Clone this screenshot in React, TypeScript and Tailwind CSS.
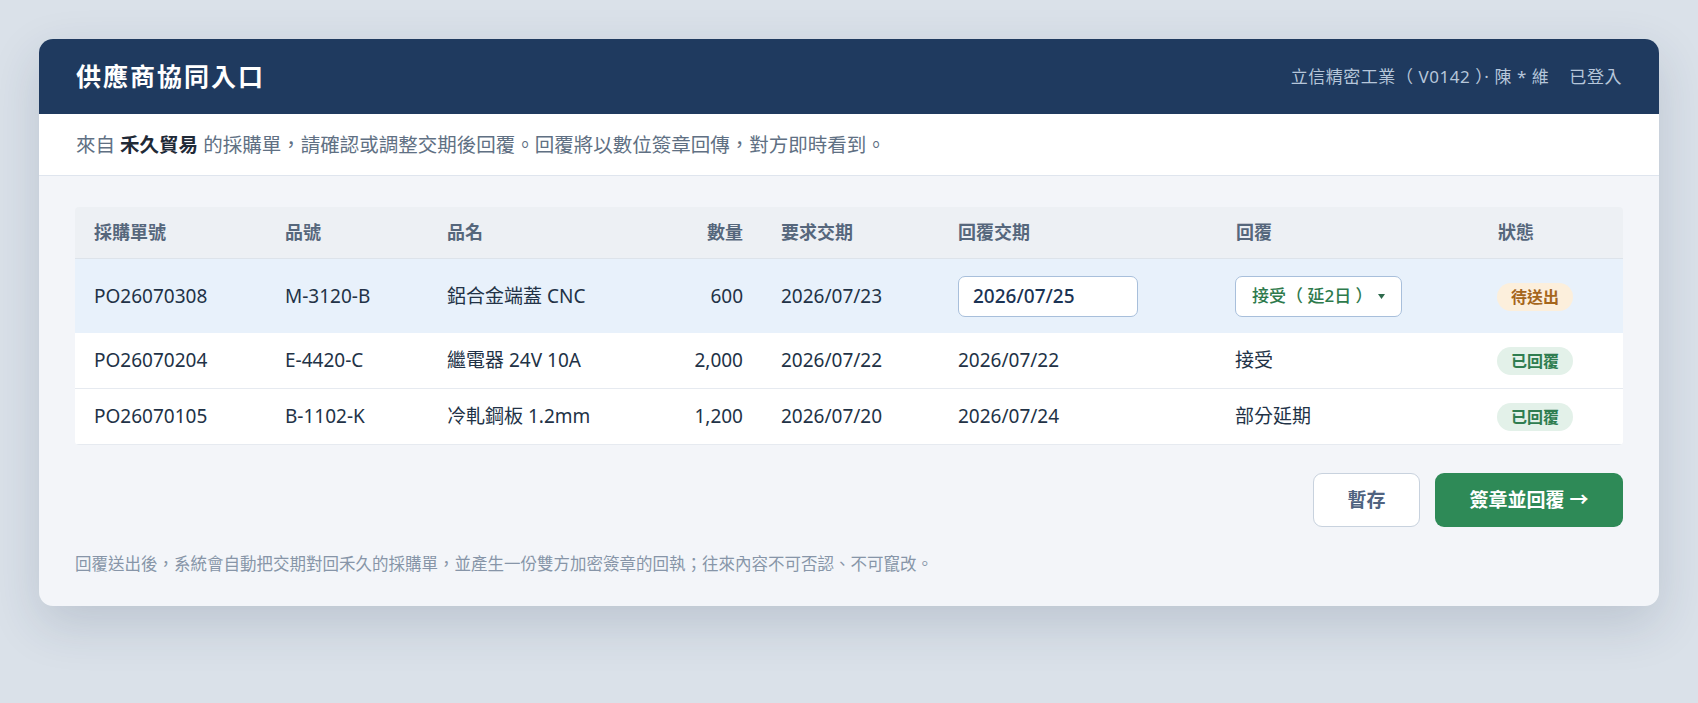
import React from "react";

type Row = {
  po: string;
  part: string;
  name: string;
  qty: string;
  required: string;
  reply: string;
  answer: string;
  status: "pending" | "replied";
  editing?: boolean;
};

const rows: Row[] = [
  {
    po: "PO26070308",
    part: "M-3120-B",
    name: "鋁合金端蓋 CNC",
    qty: "600",
    required: "2026/07/23",
    reply: "2026/07/25",
    answer: "接受（ 延2日 ）",
    status: "pending",
    editing: true,
  },
  {
    po: "PO26070204",
    part: "E-4420-C",
    name: "繼電器 24V 10A",
    qty: "2,000",
    required: "2026/07/22",
    reply: "2026/07/22",
    answer: "接受",
    status: "replied",
  },
  {
    po: "PO26070105",
    part: "B-1102-K",
    name: "冷軋鋼板 1.2mm",
    qty: "1,200",
    required: "2026/07/20",
    reply: "2026/07/24",
    answer: "部分延期",
    status: "replied",
  },
];

const cols = "grid grid-cols-[191px_162px_192px_142px_177px_278px_262px_1fr]";

function StatusBadge({ status }: { status: Row["status"] }) {
  if (status === "pending") {
    return (
      <span className="inline-flex h-[28px] items-center rounded-full bg-[#fcefdc] px-[14px] text-[16px] font-semibold text-[#a5661c]">
        待送出
      </span>
    );
  }
  return (
    <span className="inline-flex h-[28px] items-center rounded-full bg-[#e3f1e9] px-[14px] text-[16px] font-semibold text-[#2f7d50]">
      已回覆
    </span>
  );
}

export default function App() {
  return (
    <div className="min-h-screen bg-[#dae1e9] p-[39px] font-['Noto_Sans','Noto_Sans_CJK_TC',sans-serif]">
      <div className="overflow-hidden rounded-[14px] bg-[#f3f5f9] shadow-[0_18px_50px_rgba(30,50,80,0.16)]">
        {/* Title bar */}
        <div className="flex h-[75px] items-center justify-between bg-[#1f3a5f] px-[37px]">
          <h1 className="text-[25px] font-bold tracking-[2px] text-white">供應商協同入口</h1>
          <div className="flex items-center text-[17px] tracking-[0.55px] text-[#b6c6da]">
            <span>立信精密工業（ V0142 ）· 陳 * 維</span>
            <span className="ml-[20px]">已登入</span>
          </div>
        </div>

        {/* Notice */}
        <div className="flex h-[62px] items-center border-b border-[#dfe5ee] bg-white px-[37px] text-[19.5px] text-[#607083]">
          <span>
            來自 <b className="font-bold text-[#1f2a37]">禾久貿易</b> 的採購單，請確認或調整交期後回覆。回覆將以數位簽章回傳，對方即時看到。
          </span>
        </div>

        {/* Body */}
        <div className="px-[36px] pt-[31px] pb-[30px]">
          <div className="overflow-hidden rounded-[4px]">
            <div className={`${cols} h-[52px] items-center border-b border-[#dde3ea] bg-[#edf0f4] text-[18px] font-semibold text-[#56677c]`}>
              <div className="px-[19px]">採購單號</div>
              <div className="px-[19px]">品號</div>
              <div className="px-[19px]">品名</div>
              <div className="px-[19px] text-right">數量</div>
              <div className="px-[19px]">要求交期</div>
              <div className="px-[19px]">回覆交期</div>
              <div className="px-[19px]">回覆</div>
              <div className="px-[19px]">狀態</div>
            </div>

            {rows.map((r) => (
              <div
                key={r.po}
                className={
                  r.editing
                    ? `${cols} h-[74px] items-center bg-[#e8f1fb] text-[19px] text-[#223246]`
                    : `${cols} h-[56px] items-center border-b border-[#e6eaf0] bg-white text-[19px] text-[#223246]`
                }
              >
                <div className="px-[19px]">{r.po}</div>
                <div className="px-[19px]">{r.part}</div>
                <div className="px-[19px]">{r.name}</div>
                <div className="px-[19px] text-right">{r.qty}</div>
                <div className="px-[19px]">{r.required}</div>
                <div className="px-[19px]">
                  {r.editing ? (
                    <div className="flex h-[41px] w-[180px] items-center rounded-[7px] border border-[#a8bfdb] bg-white px-[14px] text-[19px] font-medium text-[#1b3354]">
                      {r.reply}
                    </div>
                  ) : (
                    r.reply
                  )}
                </div>
                <div className="px-[18px]">
                  {r.editing ? (
                    <div className="flex h-[41px] w-[167px] items-center rounded-[7px] border border-[#a8bfdb] bg-white pl-[16px] text-[17px] font-medium text-[#2e7a4c]">
                      <span>{r.answer}</span>
                      <svg className="ml-[5px]" width="7" height="5" viewBox="0 0 7 5">
                        <path d="M0 0h7L3.5 5z" fill="#2e6a4c" />
                      </svg>
                    </div>
                  ) : (
                    r.answer
                  )}
                </div>
                <div className="px-[18px]">
                  <StatusBadge status={r.status} />
                </div>
              </div>
            ))}
          </div>

          {/* Actions */}
          <div className="mt-[28px] flex justify-end gap-[15px]">
            <button className="h-[54px] w-[107px] rounded-[9px] border border-[#c8d2de] bg-white text-[19px] font-bold text-[#4f6380]">
              暫存
            </button>
            <button className="h-[54px] w-[188px] rounded-[9px] bg-[#2e8a57] text-[19px] font-bold text-white">
              簽章並回覆 →
            </button>
          </div>

          <p className="mt-[25px] text-[16.5px] leading-[24px] text-[#8795a8]">
            回覆送出後，系統會自動把交期對回禾久的採購單，並產生一份雙方加密簽章的回執；往來內容不可否認、不可竄改。
          </p>
        </div>
      </div>
    </div>
  );
}
